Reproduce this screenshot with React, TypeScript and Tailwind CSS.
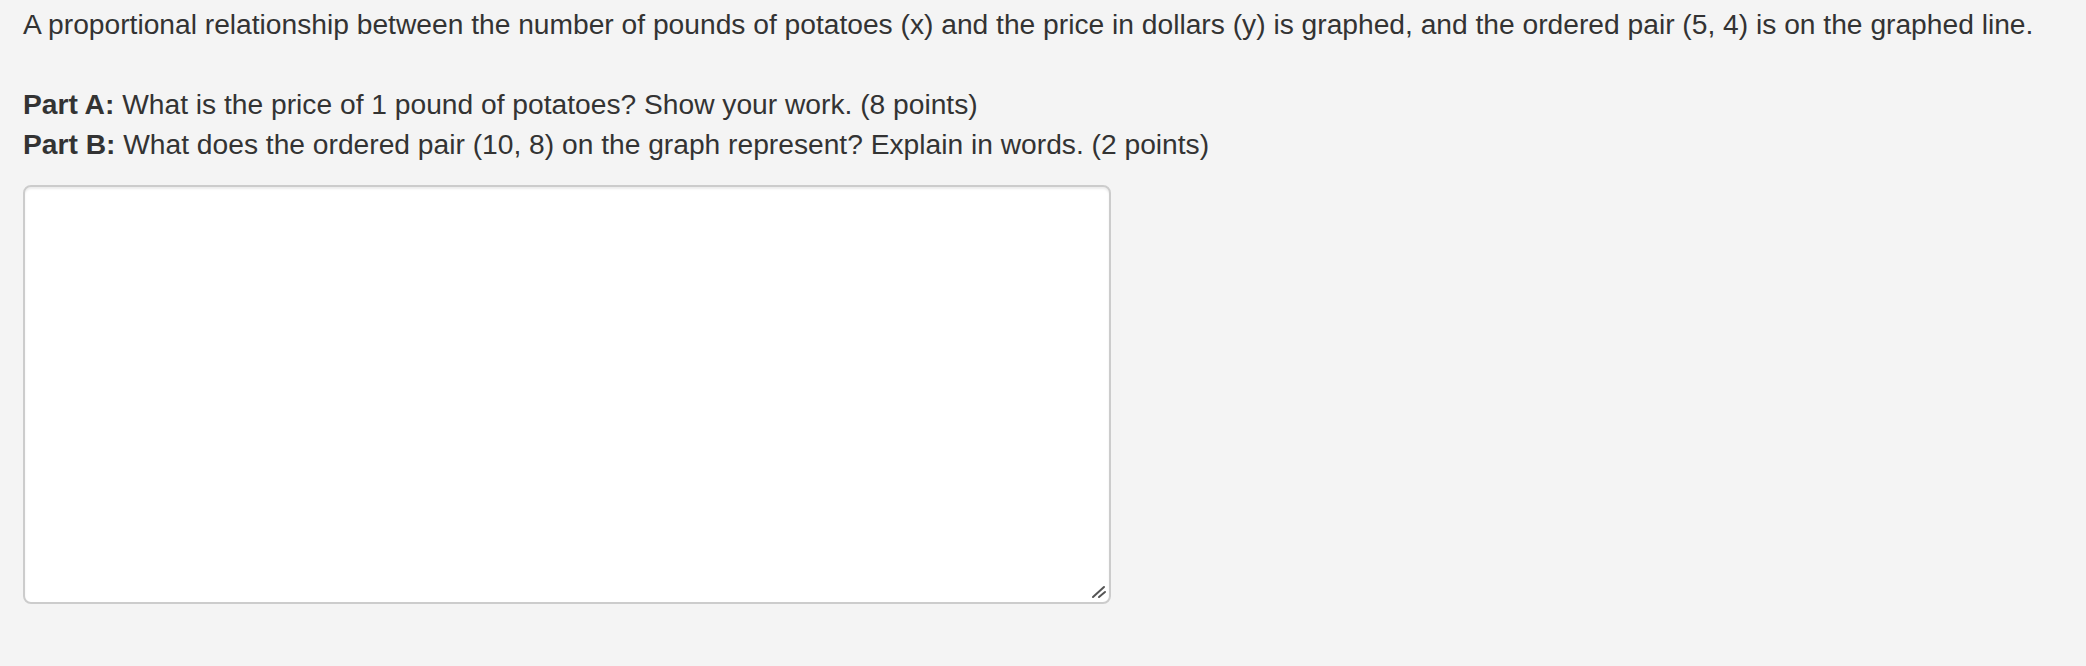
import React from 'react';

const App = () => {
  return (
    <div className="min-h-screen w-full bg-[#f4f4f4] text-[#333333]" style={{ fontFamily: '"Liberation Sans", Arial, Helvetica, sans-serif' }}>
      <div className="pl-[23px] pt-[4px] text-[28.2px] leading-[40px]">
        <p>A proportional relationship between the number of pounds of potatoes (x) and the price in dollars (y) is graphed, and the ordered pair (5, 4) is on the graphed line.</p>
        <p className="mt-[40px]">
          <b>Part A:</b> What is the price of 1 pound of potatoes? Show your work. (8 points)
        </p>
        <p>
          <b>Part B:</b> What does the ordered pair (10, 8) on the graph represent? Explain in words. (2 points)
        </p>
        <div className="relative mt-[21px] w-[1088px]">
          <textarea
            className="block h-[419px] w-full resize-none rounded-[8px] border-2 border-[#cccccc] bg-white p-3 shadow-[inset_0_2px_2px_rgba(0,0,0,0.075)] outline-none"
          />
          <svg className="pointer-events-none absolute bottom-[5px] right-[4px]" width="16" height="14" viewBox="0 0 16 14">
            <line x1="2" y1="12" x2="13" y2="2" stroke="#555" strokeWidth="2" strokeLinecap="round" />
            <line x1="8" y1="12" x2="14" y2="7" stroke="#555" strokeWidth="2" strokeLinecap="round" />
          </svg>
        </div>
      </div>
    </div>
  );
};

export default App;
